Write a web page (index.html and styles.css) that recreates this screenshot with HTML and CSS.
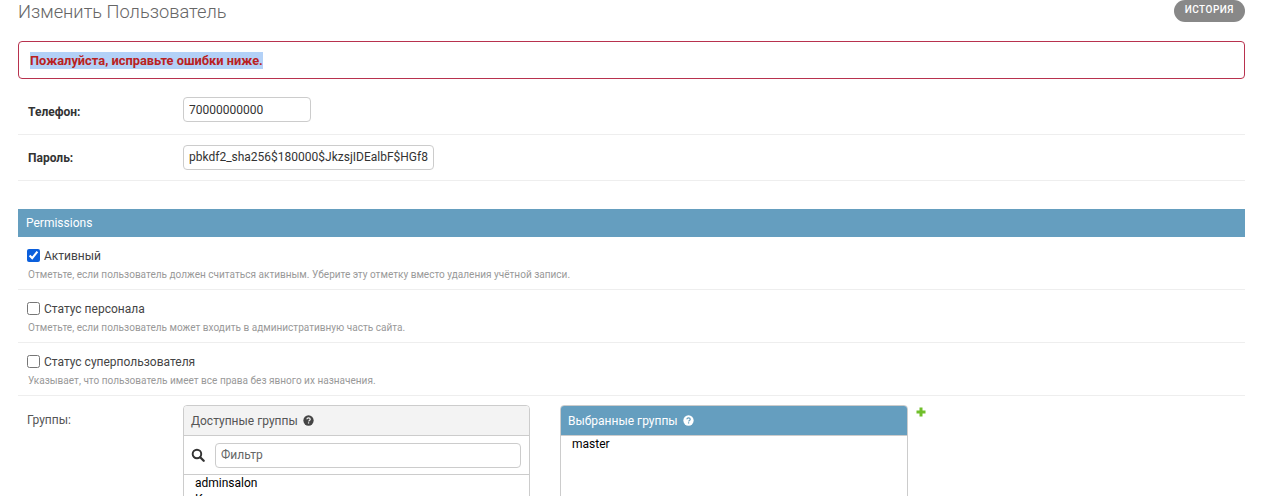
FILE: index.html
```html
<!DOCTYPE html>
<html lang="ru">
<head>
<meta charset="utf-8">
<title>Изменить Пользователь</title>
<link rel="stylesheet" href="styles.css">
</head>
<body>
<div class="content">
  <header class="head">
    <h1>Изменить Пользователь</h1>
    <a class="history">История</a>
  </header>
  <p class="errornote"><span class="selected">Пожалуйста, исправьте ошибки ниже.</span></p>
  <div class="row first">
    <label class="req">Телефон:</label>
    <input class="field short" type="text" value="70000000000">
  </div>
  <div class="row second">
    <label class="req">Пароль:</label>
    <input class="field long" type="text" value="pbkdf2_sha256$180000$JkzsjIDEalbF$HGf8Zq1nVt">
  </div>
  <h2 class="section">Permissions</h2>
  <div class="check">
    <div class="check-line"><input type="checkbox" checked><label>Активный</label></div>
    <p class="help">Отметьте, если пользователь должен считаться активным. Уберите эту отметку вместо удаления учётной записи.</p>
  </div>
  <div class="check">
    <div class="check-line"><input type="checkbox"><label>Статус персонала</label></div>
    <p class="help">Отметьте, если пользователь может входить в административную часть сайта.</p>
  </div>
  <div class="check">
    <div class="check-line"><input type="checkbox"><label>Статус суперпользователя</label></div>
    <p class="help">Указывает, что пользователь имеет все права без явного их назначения.</p>
  </div>
  <div class="groups">
    <label class="groups-label">Группы:</label>
    <div class="selector available">
      <div class="sel-title">Доступные группы
        <svg class="help-ico" viewBox="0 0 16 16"><circle cx="8" cy="8" r="7.5" fill="currentColor"/><path class="q" d="M5.600 6.200C5.800 4.800 6.800 4.100 8.100 4.100c1.400 0 2.400 .9 2.400 2 0 1-.6 1.500-1.300 2-.6.4-.8.7-.8 1.300" fill="none" stroke-width="1.800"/><rect class="qd" x="7.200" y="10.600" width="1.800" height="1.800"/></svg>
      </div>
      <div class="filter">
        <svg class="search" viewBox="0 0 16 16"><circle cx="6.800" cy="6.800" r="4.900" fill="none" stroke="currentColor" stroke-width="2.200"/><path d="M10.500 10.500l4 4" stroke="currentColor" stroke-width="2.600" stroke-linecap="round"/></svg>
        <input class="field filter-input" type="text" placeholder="Фильтр">
      </div>
      <div class="list"><div>adminsalon</div><div>Клиент</div></div>
    </div>
    <div class="selector chosen">
      <div class="sel-title blue">Выбранные группы
        <svg class="help-ico" viewBox="0 0 16 16"><circle cx="8" cy="8" r="7.500" fill="currentColor"/><path class="q" d="M5.600 6.200C5.800 4.800 6.800 4.100 8.100 4.100c1.400 0 2.400 .9 2.400 2 0 1-.6 1.500-1.300 2-.6.4-.8.7-.8 1.300" fill="none" stroke-width="1.800"/><rect class="qd" x="7.200" y="10.600" width="1.800" height="1.800"/></svg>
      </div>
      <div class="list tall"><div>master</div></div>
    </div>
    <svg class="add" viewBox="0 0 10 10"><path d="M5 0.500v9M0.500 5h9" stroke="#70bf2b" stroke-width="3"/></svg>
  </div>
</div>
</body>
</html>
```

FILE: styles.css
```css
* { box-sizing: border-box; }
html, body { margin: 0; height: 496px; overflow: hidden; background: #fff; }
body { font-family: Roboto, "Liberation Sans", sans-serif; font-size: 12px; color: #333; }
.content { padding: 0 35px 0 18px; }
.head { display: flex; justify-content: space-between; align-items: flex-start; height: 41px; }
h1 { margin: 0; font-size: 18.3px; line-height: 24px; font-weight: 300; color: #666; }
.history { height: 22px; padding: 0 11px; border-radius: 11px; background: #888; color: #fff; font-size: 10px; font-weight: 500; letter-spacing: .5px; line-height: 20px; text-transform: uppercase; }
.errornote { margin: 0; height: 38px; padding: 0 11px; display: flex; align-items: center; border: 1px solid #b8324e; border-radius: 4px; color: #ba2121; font-weight: 700; font-size: 12.85px; }
.selected { background: #b3d1f7; line-height: 17px; }
.row { display: flex; align-items: center; border-bottom: 1px solid #eee; padding-left: 10px; }
.row.first { margin-top: 18px; height: 38px; padding-bottom: 12px; }
.row.second { height: 46px; padding-bottom: 1px; }
.row label { width: 155px; flex: none; }
.first label { margin-top: 4px; }
.second label { margin-top: 2px; }
.req { font-weight: 700; font-size: 12px; color: #333; }
.field { height: 25px; padding: 0 5px; border: 1px solid #ccc; border-radius: 4px; background: #fff; font-family: inherit; font-size: 12px; color: #333; }
.short { width: 128px; }
.long { width: 251px; }
.section { margin: 28px 0 0; height: 28px; padding: 0 8px; background: #659ebf; color: #fff; font-size: 12px; font-weight: 400; line-height: 28px; }
.check { height: 53px; padding: 12px 10px 0; border-bottom: 1px solid #eee; }
.check:first-of-type { height: 52px; }
.check-line { display: flex; align-items: center; height: 13px; gap: 4px; font-size: 12px; color: #444; }
.check-line input { margin: 0 0 0 -1px; width: 13px; height: 13px; flex: none; accent-color: #0b5fdc; }
.help { margin: 6px 0 0; font-size: 10.05px; line-height: 14px; color: #999; }
.groups { display: flex; align-items: flex-start; padding: 9px 0 0 9px; }
.groups-label { width: 156px; flex: none; font-size: 12px; color: #555; line-height: 30px; height: 30px; }
.selector { width: 347px; height: 200px; border: 1px solid #ccc; border-radius: 4px 4px 0 0; }
.chosen { margin-left: 30px; width: 348px; }
.sel-title { display: flex; align-items: center; gap: 5px; height: 30px; padding: 0 7px; background: #f3f3f3; border-bottom: 1px solid #ccc; color: #555; font-size: 12px; border-radius: 3px 3px 0 0; }
.sel-title.blue { background: #659ebf; color: #fff; }
.help-ico { width: 11px; height: 11px; margin-left: 0; }
.available .help-ico { color: #444; }
.available .q { stroke: #f3f3f3; }
.available .qd { fill: #f3f3f3; }
.chosen .q { stroke: #659ebf; }
.chosen .qd { fill: #659ebf; }
.filter { display: flex; align-items: center; gap: 10px; height: 39px; padding: 0 8px 0 7px; border-bottom: 1px solid #ccc; }
.search { width: 14px; height: 14px; color: #333; flex: none; }
.filter-input { width: 306px; padding: 0 5px; color: #666; }
.filter-input::placeholder { color: #666; }
.list { padding: 0 11px; color: #000; font-size: 12px; line-height: 16px; }
.add { width: 10px; height: 10px; margin: 2px 0 0 8px; }
```
